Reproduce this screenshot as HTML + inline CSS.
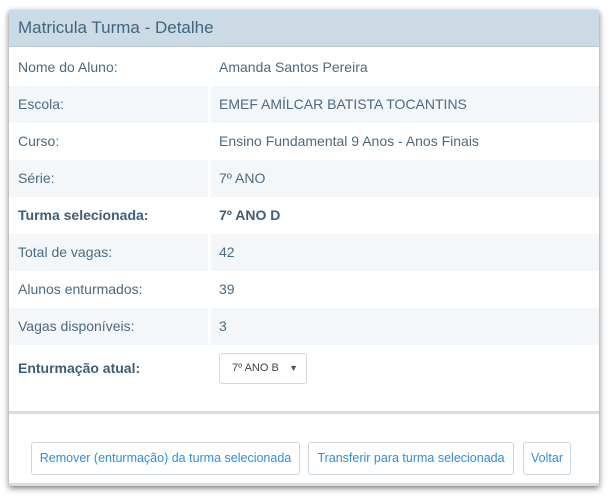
<!DOCTYPE html>
<html><head><style>
body{margin:0;width:612px;height:502px;background:#fff;font-family:"Liberation Sans",sans-serif;color:#4a6a82;position:relative;overflow:hidden}
.p{position:absolute;left:9px;top:10px;width:590px;height:476px;background:#fff;box-shadow:0 2px 6px rgba(0,0,0,.55);border-bottom:3px solid #d3dee6;box-sizing:border-box}
.h{height:36px;background:#cbdae4;font-size:17px;color:#3f6680;line-height:36px;padding-left:9px;border-bottom:1px solid #b9c9d4}
.r{position:absolute;left:0;width:590px;height:37px;font-size:14px;line-height:37px}
.r .l{position:absolute;left:9px}
.r .v{position:absolute;left:210px}
.r.a .bg1{position:absolute;left:0;top:0;width:199px;height:37px;background:#f4f7fa}
.r.a .bg2{position:absolute;left:202px;top:0;width:388px;height:37px;background:#f4f7fa}
.b{font-weight:bold;color:#3d5e76}
.sel{position:absolute;left:210px;top:343px;width:88px;height:31px;border:1px solid #cfd9e0;border-radius:3px;box-sizing:border-box;font-size:11px;color:#444;line-height:29px;padding-left:12px}
.sel span{position:absolute;right:8px;font-size:9px;color:#555}
.sep{position:absolute;left:0;top:401px;width:590px;height:3px;background:#d3dee6}
.btn{position:absolute;top:432px;height:33px;border:1px solid #cad7e0;border-radius:3px;box-sizing:border-box;font-size:12.5px;color:#2f8fd8;line-height:31px;text-align:center;white-space:nowrap}
</style></head><body>
<div class="p">
<div class="h">Matricula Turma - Detalhe</div>
<div class="r" style="top:39px"><span class="l">Nome do Aluno:</span><span class="v">Amanda Santos Pereira</span></div>
<div class="r a" style="top:76px"><div class="bg1"></div><div class="bg2"></div><span class="l">Escola:</span><span class="v">EMEF AMÍLCAR BATISTA TOCANTINS</span></div>
<div class="r" style="top:113px"><span class="l">Curso:</span><span class="v">Ensino Fundamental 9 Anos - Anos Finais</span></div>
<div class="r a" style="top:150px"><div class="bg1"></div><div class="bg2"></div><span class="l">Série:</span><span class="v">7º ANO</span></div>
<div class="r b" style="top:187px"><span class="l">Turma selecionada:</span><span class="v">7º ANO D</span></div>
<div class="r a" style="top:224px"><div class="bg1"></div><div class="bg2"></div><span class="l">Total de vagas:</span><span class="v">42</span></div>
<div class="r" style="top:261px"><span class="l">Alunos enturmados:</span><span class="v">39</span></div>
<div class="r a" style="top:298px"><div class="bg1"></div><div class="bg2"></div><span class="l">Vagas disponíveis:</span><span class="v">3</span></div>
<div class="r b" style="top:340px"><span class="l">Enturmação atual:</span></div>
<div class="sel">7º ANO B<span>▼</span></div>
<div class="sep"></div>
<div class="btn" style="left:22px;width:269px">Remover (enturmação) da turma selecionada</div>
<div class="btn" style="left:299px;width:206px">Transferir para turma selecionada</div>
<div class="btn" style="left:514px;width:48px">Voltar</div>
</div>
</body></html>
